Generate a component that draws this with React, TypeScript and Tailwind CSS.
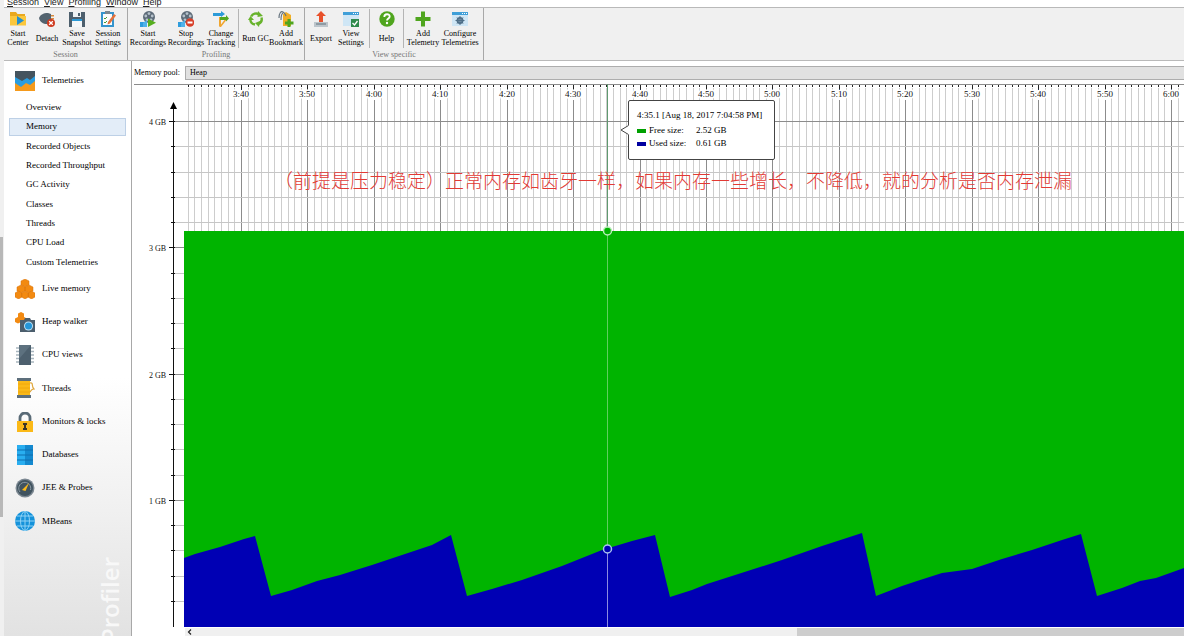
import { ReactNode } from "react";

type ToolProps = {
    lines: string[];
    width: string;
    children: ReactNode;
}

const Tool = ({ lines, width, children }: ToolProps) => {
    return (
        <button type="button" className={`${width} shrink-0 flex flex-col items-center pt-[3px]`}>
            <svg viewBox="0 0 16 16" className="w-4 h-4 shrink-0">{children}</svg>
            <span className="h-[22px] flex flex-col justify-center text-[8px] leading-[9px] whitespace-nowrap text-black">
                {lines.map((line) => (
                    <span key={line}>{line}</span>
                ))}
            </span>
        </button>
    )
}

const ToolGroup = ({ label, children }: { label: string, children: ReactNode }) => {
    return (
        <div className="flex flex-col border-r border-[#a8a8a8] shrink-0">
            <div className="flex h-[42px]">{children}</div>
            <div className="text-center text-[8px] leading-[10px] text-[#777]">{label}</div>
        </div>
    )
}

const Separator = () => <div className="w-px h-[39px] mt-px bg-[#b4b4b4] shrink-0" />;

/* Toolbar drawings */
const Reel = () => (
    <>
        <circle cx="9" cy="6" r="6" fill="#5d6b78" />
        <circle cx="9" cy="2.6" r="1.4" fill="#b6c2cc" />
        <circle cx="12.2" cy="5" r="1.4" fill="#b6c2cc" />
        <circle cx="5.8" cy="5" r="1.4" fill="#b6c2cc" />
        <circle cx="7" cy="8.8" r="1.4" fill="#b6c2cc" />
        <circle cx="11" cy="8.8" r="1.4" fill="#b6c2cc" />
        <path d="M0 11h4v5H0z" fill="#2f9ddd" />
        <path d="M3 12l4-3v7H3z" fill="#4fb2ea" />
    </>
);

const Plus = () => <path d="M9.5 8h3v2.500h3v3h-3V16h-3v-2.500H7v-3h2.500z" fill="#4fa51e" />;

const BrowserWindow = () => (
    <>
        <path d="M0 1h16v14H0z" fill="#cfe6f5" />
        <path d="M0 1h16v3H0z" fill="#3f9fd8" />
        <path d="M10 2h1v1h-1zM12 2h1v1h-1zM14 2h1v1h-1z" fill="#fff" />
    </>
);

const Toolbar = () => {
    return (
        <div className="flex h-[54px] bg-[#f0f0f0] border-y border-[#b9b9b9] overflow-hidden">
            <ToolGroup label="Session">
                <Tool lines={["Start", "Center"]} width="w-[28px]">
                    <path d="M0 1h6l1.500 2H15v11H0z" fill="#e9a91f" />
                    <path d="M0 5h16v9.500H0z" fill="#fbc73c" />
                    <path d="M7 5l7 4.500L7 14z" fill="#2290cf" />
                </Tool>
                <Tool lines={["Detach"]} width="w-[30px]">
                    <path d="M0 7c1-3 4-5 9-5l3 1v9l-4 1c-4 0-7-2-8-6z" fill="#53636f" />
                    <path d="M12 4h3v1.500h-3zM12 7h3v1.500h-3z" fill="#d88a3c" />
                    <circle cx="12" cy="12" r="4" fill="#cf3b20" />
                    <path d="M10.200 10.200l3.600 3.600M13.800 10.200l-3.600 3.600" stroke="#fff" strokeWidth="1.300" />
                </Tool>
                <Tool lines={["Save", "Snapshot"]} width="w-[30px]">
                    <path d="M0 1h16v15H0z" fill="#4d5f6d" />
                    <path d="M4 1h8v5H4z" fill="#eef2f4" />
                    <path d="M9 2h2v3H9z" fill="#4d5f6d" />
                    <path d="M3 9h10v7H3z" fill="#f4f7f9" />
                    <path d="M3 8h10v2H3z" fill="#2c9ad7" />
                </Tool>
                <Tool lines={["Session", "Settings"]} width="w-[32px]">
                    <path d="M1 1h13v15H1z" fill="#3594cd" />
                    <path d="M3 3h9v11H3z" fill="#fbfbfb" />
                    <path d="M5 0h5v3H5z" fill="#7c8891" />
                    <path d="M4 7l1 1 2-2M4 11l1 1 2-2" stroke="#4b9b32" fill="none" />
                    <path d="M8 11l6-8 2 1.500-6 8-2.500 1z" fill="#e5713a" />
                </Tool>
                <div className="w-[3px]" />
            </ToolGroup>

            <ToolGroup label="Profiling">
                <Tool lines={["Start", "Recordings"]} width="w-[40px]">
                    <Reel />
                    <path d="M8 7.500l8 4.200L8 16z" fill="#56ae1f" />
                </Tool>
                <Tool lines={["Stop", "Recordings"]} width="w-[36px]">
                    <Reel />
                    <circle cx="12" cy="11.500" r="4.300" fill="#d8402a" />
                    <path d="M9.500 10.500h5v2h-5z" fill="#fff" />
                </Tool>
                <Tool lines={["Change", "Tracking"]} width="w-[34px]">
                    <path d="M0 2h8V0l4 3-4 3V5H0z" fill="#2c9ad7" />
                    <path d="M6 6h2v9H6zM13 7h2l-7 9H6z" fill="#f0a630" />
                    <path d="M7 6h6V4l3 3.500-3 3V9H7z" fill="#54a71f" />
                </Tool>
                <Separator />
                <Tool lines={["Run GC"]} width="w-[33px]">
                    <g fill="none" stroke="#68b32c" strokeWidth="2.400">
                        <path d="M3.200 5.500A5.600 5.600 0 0 1 11 3.200" />
                        <path d="M13.500 6.500A5.600 5.600 0 0 1 10.500 13" />
                        <path d="M7 13.500A5.600 5.600 0 0 1 2.300 8.500" />
                    </g>
                    <path d="M10 0l5 5-5.500 1zM12 10l-1 6-4-4zM0 9l2.500-4L6 9z" fill="#68b32c" />
                </Tool>
                <Tool lines={["Add", "Bookmark"]} width="w-[28px]">
                    <path d="M5 3l3-2 5 3v11H5z" fill="#f2ae25" />
                    <path d="M1 7c0-5 2-7 4-6s2 2 3 4M3 9c0-4 0-6 2-7" stroke="#66747f" strokeWidth="1.200" fill="none" />
                    <Plus />
                </Tool>
                <div className="w-1" />
            </ToolGroup>

            <ToolGroup label="View specific">
                <Tool lines={["Export"]} width="w-[32px]">
                    <path d="M1 11h14v5H1z" fill="#bcc5cb" />
                    <path d="M3 12h10v2H3z" fill="#8f9ba3" />
                    <path d="M8 0l5 5h-3v6H6V5H3z" fill="#e8512b" />
                </Tool>
                <Tool lines={["View", "Settings"]} width="w-[28px]">
                    <BrowserWindow />
                    <path d="M8 8h8v8H8z" fill="#2f8a4c" />
                    <path d="M9.500 12l2 2 3-4" stroke="#fff" strokeWidth="1.300" fill="none" />
                </Tool>
                <div className="w-1" />
                <Separator />
                <Tool lines={["Help"]} width="w-[33px]">
                    <circle cx="8" cy="8" r="7.700" fill="#4fa51e" />
                    <path d="M5.300 6c0-3.600 5.400-3.600 5.400-.5 0 2-2.700 2-2.700 4" stroke="#fff" strokeWidth="1.800" fill="none" />
                    <circle cx="8" cy="12" r="1.200" fill="#fff" />
                </Tool>
                <Separator />
                <Tool lines={["Add", "Telemetry"]} width="w-[38px]">
                    <path d="M6 0.500h4V6h5.500v4H10v5.500H6V10H.5V6H6z" fill="#4fa51e" />
                </Tool>
                <Tool lines={["Configure", "Telemetries"]} width="w-[36px]">
                    <BrowserWindow />
                    <circle cx="8" cy="9.500" r="2.600" fill="none" stroke="#4f6f88" strokeWidth="1.800" />
                    <path d="M8 5v9M3.500 9.500h9M5 6.500l6 6M11 6.500l-6 6" stroke="#4f6f88" strokeWidth="1" />
                </Tool>
                <div className="w-[5px]" />
            </ToolGroup>
        </div>
    )
}

const telemetryViews = [
    "Overview",
    "Memory",
    "Recorded Objects",
    "Recorded Throughput",
    "GC Activity",
    "Classes",
    "Threads",
    "CPU Load",
    "Custom Telemetries",
];

const Hexagons = () => (
    <g fill="#f28a12" stroke="#d9730a" strokeWidth=".5">
        <path d="M10 0l4 2v4l-4 2-4-2V2z" />
        <path d="M6 6l4 2v4l-4 2-4-2V8zM14 6l4 2v4l-4 2-4-2V8z" />
        <path d="M3.500 12l3.500 2v4l-3.500 2L0 18v-4zM10 12l3.500 2v4L10 20l-3.500-2v-4zM16.500 12l3.500 2v4l-3.500 2-3.500-2v-4z" />
    </g>
);

const sections = [
    { label: "Live memory", icon: <Hexagons /> },
    {
        label: "Heap walker",
        icon: (
            <>
                <path d="M6 0l3 1.500V5l3 1.500V10l-3 1.500L6 10l-3 1.500L0 10V6.500L3 5V1.500z" fill="#f28a12" />
                <path d="M5 8h4l1-2h5l1 2h4v12H5z" fill="#4b5e6d" />
                <circle cx="13.500" cy="14" r="4.500" fill="#bfe4f8" />
                <circle cx="13.500" cy="14" r="3.500" fill="#2596d8" />
            </>
        ),
    },
    {
        label: "CPU views",
        icon: (
            <>
                <path d="M1 3h18M1 6.500h18M1 10h18M1 13.500h18M1 17h18" stroke="#a9b6bf" strokeWidth="1.300" />
                <path d="M4 0h12v20H4z" fill="#4d606e" />
                <path d="M4 0h12L4 14z" fill="#5d717f" />
            </>
        ),
    },
    {
        label: "Threads",
        icon: (
            <>
                <path d="M3 2h12v16H3z" fill="#fbb917" />
                <path d="M3 6h12M3 10h12M3 14h12" stroke="#f0a80f" />
                <path d="M2 0h14v3H2zM2 17h14v3H2z" fill="#5d6f7c" />
                <path d="M15 5c4-1 1 4 4 6-3 0-3 2-4 3" stroke="#e0a63a" strokeWidth="1.200" fill="none" />
            </>
        ),
    },
    {
        label: "Monitors & locks",
        icon: (
            <>
                <path d="M5 10V6a5 5 0 0 1 10 0v4" stroke="#5a6b77" strokeWidth="2.800" fill="none" />
                <path d="M2 9h16v11H2z" fill="#fbb917" />
                <path d="M8 11h4v2h-1v3h1v2H8v-2h1v-3H8z" fill="#3c3626" />
            </>
        ),
    },
    {
        label: "Databases",
        icon: (
            <>
                <path d="M2 0h16v20H2z" fill="#29aef0" />
                <path d="M10 0h8v20h-8z" fill="#1489cf" />
                <path d="M2 5h16M2 10h16M2 15h16" stroke="#0f6fb0" />
            </>
        ),
    },
    {
        label: "JEE & Probes",
        icon: (
            <>
                <circle cx="10" cy="10" r="9.500" fill="#7b8791" />
                <circle cx="10" cy="10" r="8" fill="#40535f" />
                <path d="M5 14A6 6 0 1 1 15.500 12" stroke="#8b99a3" fill="none" />
                <path d="M7 12l7-7-3.500 8z" fill="#fbb917" />
            </>
        ),
    },
    {
        label: "MBeans",
        icon: (
            <>
                <circle cx="10" cy="10" r="10" fill="#1592da" />
                <g stroke="#8fd2f5" fill="none">
                    <ellipse cx="10" cy="10" rx="4.500" ry="9.500" />
                    <path d="M10 0v20M0 10h20M2 5h16M2 15h16" />
                </g>
            </>
        ),
    },
];

const Sidebar = () => {
    return (
        <nav className="relative w-[128px] shrink-0 overflow-hidden border-r border-[#a8a8a8] bg-linear-to-b from-white from-55% to-[#e2e2e2] text-[9px] text-black">
            <div className="absolute left-[92px] top-[496px] rotate-180 [writing-mode:vertical-rl] font-['Open_Sans',sans-serif] font-semibold text-2xl leading-[28px] text-[#f8f8f8]">
                JProfiler
            </div>
            <div className="relative">
                <button type="button" className="flex items-center gap-[7px] pl-[11px] h-[37px] pt-[3px]">
                    <svg viewBox="0 0 20 20" className="w-5 h-5">
                        <path d="M0 0h20v20H0z" fill="#f59a1c" />
                        <path d="M0 0h20v10l-5 4-4-2-5 4-6-4z" fill="#2a9de0" />
                        <path d="M0 0h20v5l-5 4-3-2-5 3-7-4z" fill="#45545f" />
                    </svg>
                    Telemetries
                </button>
                <ul className="grid grid-rows-9 h-[174px] px-[5px]">
                    {telemetryViews.map((view) => (
                        <li key={view} className="py-px">
                            <button
                                type="button"
                                className={`w-full h-full border px-4 flex items-center whitespace-nowrap ${view === "Memory" ? "bg-[#e3edf8] border-[#bdd0e6]" : "border-transparent"}`}
                            >
                                {view}
                            </button>
                        </li>
                    ))}
                </ul>
                <ul className="grid grid-rows-8 h-[266px]">
                    {sections.map((section) => (
                        <li key={section.label} className="flex">
                            <button type="button" className="flex items-center gap-[7px] pl-[11px] whitespace-nowrap">
                                <svg viewBox="0 0 20 20" className="w-5 h-5">{section.icon}</svg>
                                {section.label}
                            </button>
                        </li>
                    ))}
                </ul>
            </div>
        </nav>
    )
}

/* Chart geometry, in chart pixels */
const AXIS_X = 41;
const PLOT_X = 52;
const FIRST_LABEL_X = 109;
const STEP_X = 66.43;
const FOUR_GB_Y = 38;
const GB_HEIGHT = 126.3;
const GREEN_Y = 147;
const CURSOR_X = 475;
const FAR = 4000;

const times = ["3:40", "3:50", "4:00", "4:10", "4:20", "4:30", "4:40", "4:50", "5:00", "5:10", "5:20", "5:30", "5:40", "5:50", "6:00"];
const minorTicks = Array.from({ length: 150 }, (_, i) => i - 8);
const gbTicks = Array.from({ length: 20 }, (_, i) => i);
const usedHeap = "52,474 63,470 88,463 112,455 123,452 139,512 160,506 185,497 208,491 240,481 270,471 300,461 319,451 335,512 360,505 390,496 430,482 470,466 500,457 523,451 538,513 560,506 575,500 600,492 650,476 690,462 730,449 744,512 770,502 785,497 810,489 840,485 870,475 900,466 930,456 949,450 965,512 990,504 1008,497 1024,494 1052,484";

const Chart = () => {
    return (
        <div className="relative flex-1 min-h-0 overflow-hidden">
            <svg className="block w-full h-full" shapeRendering="crispEdges">
                {/* Grid */}
                {minorTicks.map((i) => {
                    const major = i % 10 === 0;
                    const x = Math.round(FIRST_LABEL_X + i * STEP_X / 10) + 0.5;
                    return (
                        <g key={i}>
                            <path d={`M${x} ${major ? 16 : 4}V${GREEN_Y}`} stroke={major ? "#8c8c8c" : "#cdcdcd"} />
                            <path d={`M${x} 0V${major ? 6 : 3}`} stroke="#222" />
                        </g>
                    )
                })}
                {gbTicks.map((i) => {
                    const major = i % 5 === 0;
                    const y = Math.round(FOUR_GB_Y + i * GB_HEIGHT / 5) - 0.5;
                    return (
                        <g key={i}>
                            <path d={`M${AXIS_X} ${y}H${FAR}`} stroke={major ? "#8c8c8c" : "#c6c6c6"} />
                            <path d={`M${major ? 37 : 39} ${y}H${AXIS_X + 2}`} stroke="#111" />
                        </g>
                    )
                })}
                <path d="M2 0.500H4000" stroke="#8c8c8c" />
                <path d="M41.500 24V4000" stroke="#111" />
                <path d="M38 25l3.500-7 3.500 7z" fill="#000" shapeRendering="auto" />

                {/* Areas */}
                <rect x={PLOT_X} y={GREEN_Y} width={FAR} height={FAR} fill="#00b400" />
                <polygon points={`${usedHeap} 1052,${FAR} 52,${FAR}`} fill="#0000b4" shapeRendering="auto" />

                {/* Labels */}
                <g fill="#111">
                    {times.map((time, i) => (
                        <text key={time} x={Math.round(FIRST_LABEL_X + i * STEP_X)} y="13" fontSize="9" textAnchor="middle" stroke="#fff" strokeWidth="3" paintOrder="stroke">{time}</text>
                    ))}
                    {[4, 3, 2, 1].map((gb, i) => (
                        <text key={gb} x="34" y={Math.round(FOUR_GB_Y + i * GB_HEIGHT) + 3} fontSize="8" textAnchor="end">{gb} GB</text>
                    ))}
                </g>

                {/* Cursor */}
                <path d={`M${CURSOR_X + 0.5} 0V${GREEN_Y}`} stroke="#5f9a6f" />
                <path d={`M${CURSOR_X + 0.5} ${GREEN_Y}V465`} stroke="#5fce5f" />
                <path d={`M${CURSOR_X + 0.5} 465V${FAR}`} stroke="#8c8ce0" />
                <g shapeRendering="auto" strokeWidth="1.500">
                    <circle cx={CURSOR_X + 0.5} cy={GREEN_Y} r="4" fill="#00b400" stroke="#b9ecb9" />
                    <circle cx={CURSOR_X + 0.5} cy="465" r="4" fill="#0000b4" stroke="#a9c4ee" />
                </g>
            </svg>

            {/* Tooltip */}
            <div className="absolute left-[496px] top-[16px] w-[147px] h-[60px] border border-[#444] rounded-xs bg-white pl-2 pt-2 text-[9px] leading-[13px] whitespace-nowrap">
                <svg viewBox="0 0 9 10" className="absolute -left-[9px] top-[24px] w-[9px] h-[10px]">
                    <path d="M9 0L1 5l8 5z" fill="#fff" />
                    <path d="M8.500 0.500L1 5l7.500 4.500" fill="none" stroke="#444" />
                </svg>
                <div className="mb-[2px]">4:35.1 [Aug 18, 2017 7:04:58 PM]</div>
                <div className="flex items-center gap-[3px]">
                    <span className="w-[9px] h-1 bg-[#00a000]" />
                    <span className="w-[44px]">Free size:</span>
                    <span>2.52 GB</span>
                </div>
                <div className="flex items-center gap-[3px]">
                    <span className="w-[9px] h-1 bg-[#0000a0]" />
                    <span className="w-[44px]">Used size:</span>
                    <span>0.61 GB</span>
                </div>
            </div>

            {/* Annotation */}
            <p className="absolute left-[142px] top-[82px] font-['Noto_Sans_CJK_SC',sans-serif] font-light text-[19px] leading-[28px] whitespace-nowrap text-[#e23a34]">
                （前提是压力稳定）正常内存如齿牙一样，如果内存一些增长，不降低，就的分析是否内存泄漏
            </p>
        </div>
    )
}

const App = () => {
    return (
        <div className="h-screen flex overflow-hidden bg-white font-['Liberation_Serif',serif]">
            {/* Outer scroll strip */}
            <div className="w-1 shrink-0 flex flex-col bg-[#f0f0f0]">
                <div className="mt-[237px] w-[3px] h-[280px] bg-[#b8b8b8]" />
            </div>

            <div className="flex-1 min-w-0 flex flex-col">
                {/* Menu */}
                <div className="h-[7px] shrink-0 flex items-end gap-[5px] pl-[3px] font-['Liberation_Sans',sans-serif] text-[9px] leading-[9px] text-[#222] overflow-hidden">
                    {["Session", "View", "Profiling", "Window", "Help"].map((item) => (
                        <button key={item} type="button" className="first-letter:underline">{item}</button>
                    ))}
                </div>
                <Toolbar />

                <div className="flex-1 min-h-0 flex">
                    <Sidebar />
                    <main className="flex-1 min-w-0 flex flex-col">
                        <div className="h-[23px] shrink-0 flex items-center gap-1 pl-[2px] pt-[1px] text-[8px]">
                            <label htmlFor="pool" className="w-[47px] whitespace-nowrap">Memory pool:</label>
                            <select id="pool" className="flex-1 h-[14px] appearance-none border border-r-0 border-[#adadad] bg-[#e1e1e1] pl-1 text-[8px] leading-[12px]">
                                <option>Heap</option>
                            </select>
                        </div>
                        <Chart />
                        <div className="h-[9px] shrink-0 flex ml-[53px] bg-[#f0f0f0] border-t border-white">
                            <button type="button" aria-label="Scroll left" className="w-2 pl-[2px] flex items-center">
                                <svg viewBox="0 0 5 6" className="w-[5px] h-[6px]">
                                    <path d="M4 0.500L1.500 3 4 5.500" fill="none" stroke="#222" strokeWidth="1.200" />
                                </svg>
                            </button>
                            <div className="ml-auto w-[387px] bg-[#cdcdcd]" />
                        </div>
                    </main>
                </div>
            </div>
        </div>
    )
}

export default App;
